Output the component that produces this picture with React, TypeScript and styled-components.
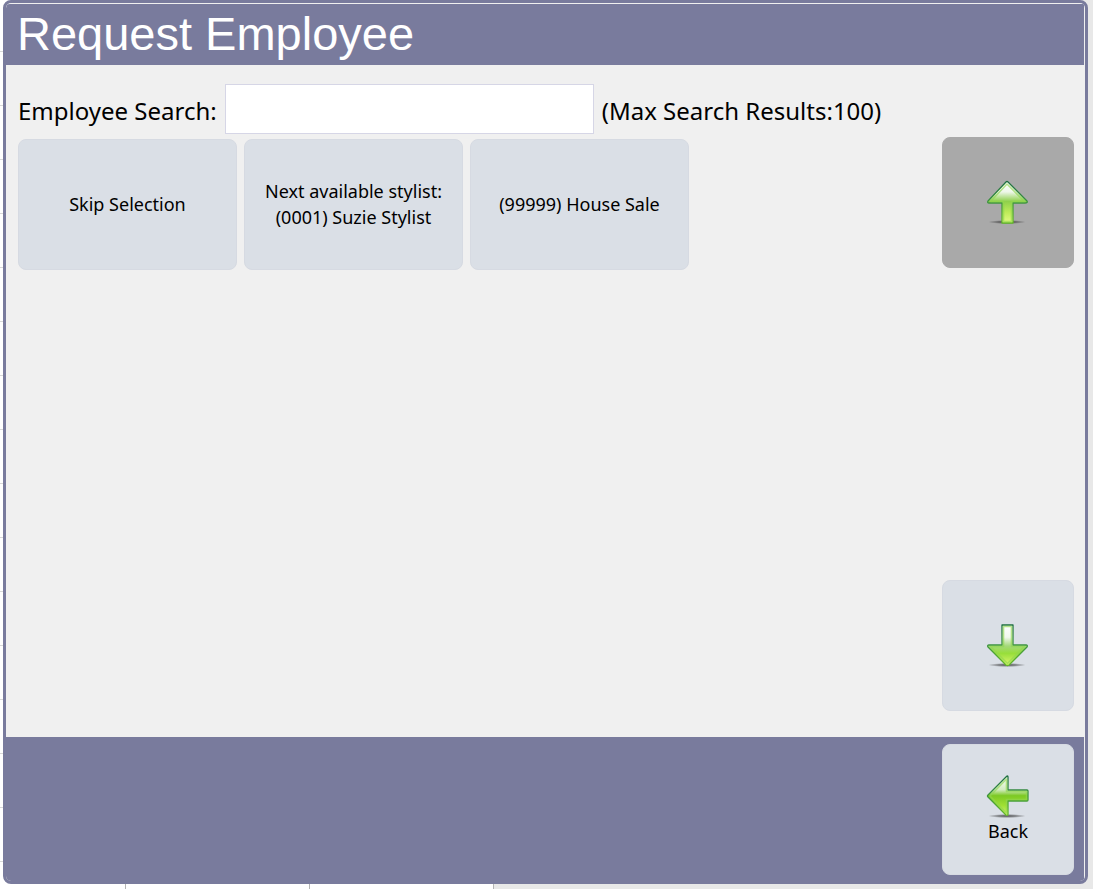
import React from "react";
import styled, { createGlobalStyle } from "styled-components";

const SLATE = "#797b9d";
const PANEL = "#f0f0f0";
const TILE = "#dadfe6";

const GlobalStyle = createGlobalStyle`
  * { box-sizing: border-box; }
  body {
    margin: 0;
    background: #e8e8e8;
    color: #000;
    font-family: Tahoma, "Noto Sans", sans-serif;
  }
  button, input { font-family: inherit; color: inherit; }
`;

const Screen = styled.div`
  position: relative;
  display: flex;
  min-height: 100vh;
  padding: 0 5px 5px 3px;
`;

/* The appointment grid that shows around the edges of the dialog. */
const GridBehind = styled.div`
  position: absolute;
  inset: 0 auto 0 0;
  width: 494px;
  background:
    repeating-linear-gradient(to left, #b4b4b4 0 1px, transparent 1px 184px),
    repeating-linear-gradient(to bottom, transparent 0 53px, #d8d8d8 53px 54px) 0 -2px,
    #fff;
`;

const Dialog = styled.section`
  position: relative;
  flex: 1;
  display: flex;
  flex-direction: column;
  padding: 1px 1px 0 0;
  border: 3px solid ${SLATE};
  border-radius: 8px;
  background: ${PANEL};
  overflow: hidden;
`;

const Header = styled.header`
  padding: 0 11px;
  background: ${SLATE};
  border-top-left-radius: 4px;
`;

const Title = styled.h1`
  margin: 0;
  padding-bottom: 1px;
  color: #fff;
  font: 400 47px/60px Arial, "Liberation Sans", sans-serif;
`;

const Content = styled.main`
  flex: 1;
  display: flex;
  flex-direction: column;
  gap: 3px;
  padding: 19px 10px 26px 12px;
`;

const SearchRow = styled.div`
  display: flex;
  align-items: center;
  gap: 8px;
  font-size: 24px;
  line-height: 46px;
  white-space: nowrap;
`;

const SearchLabel = styled.label`
  padding-top: 4px;
`;

const SearchLimit = styled.span`
  padding-top: 4px;
`;

const SearchInput = styled.input`
  width: 369px;
  height: 50px;
  padding: 0 8px;
  border: 1px solid #d6d6e6;
  border-radius: 0;
  background: #fff;
  font-size: 24px;
`;

const Results = styled.div`
  flex: 1;
  display: flex;
  justify-content: space-between;
  gap: 12px;
`;

const EmployeeList = styled.div`
  display: flex;
  flex-wrap: wrap;
  align-content: flex-start;
  gap: 7px;
  padding-top: 2px;
`;

const Scroller = styled.div`
  display: flex;
  flex-direction: column;
  justify-content: space-between;
`;

const Tile = styled.button<{ $wide?: boolean }>`
  display: flex;
  flex-direction: column;
  align-items: center;
  justify-content: center;
  width: ${(p) => (p.$wide ? 219 : 132)}px;
  height: 131px;
  padding: 0 0 2px;
  border: 1px solid #d6dae2;
  border-radius: 8px;
  background: ${TILE};
  font-size: 18px;
  line-height: 26px;
  white-space: pre-line;

  &:disabled {
    border-color: #a9a9a9;
    background: #a9a9a9;
  }
`;

const Footer = styled.footer`
  display: flex;
  justify-content: flex-end;
  padding: 7px 10px 6px;
  background: ${SLATE};
`;

const Glyph = styled.svg`
  display: block;
  width: 44px;
  height: 44px;
`;

type Direction = "up" | "down" | "left";

const outlines: Record<Direction, string> = {
  up: "M20 2 Q21 1 22 2 L41 21 Q42 23 39 23 H27 V43 H16 V23 H3 Q1 23 2 21 Z",
  down: "M16 2 H27 V22 H40 Q42 22 41 24 L23 42 Q21.5 43 20 42 L2 24 Q1 22 3 22 H16 Z",
  left: "M20 3 Q22 1 22 3 V16 H41 Q42 16 42 17 V26 Q42 27 41 27 H22 V40 Q22 42 20 41 L2 23 Q1 22 2 21 Z",
};

const insets: Record<Direction, string> = {
  up: "M21 4 L38.5 21.5 H25.5 V41.5 H17.5 V21.5 H4.5 Z",
  down: "M17.5 3.5 H25.5 V23.5 H38.5 L21.5 40.5 L4.5 23.5 H17.5 Z",
  left: "M20.5 5 V17.5 H40.5 V25.5 H20.5 V39 L4 22 Z",
};

const fills: Record<Direction, [number, string][]> = {
  up: [[0, "#ffffff"], [0.25, "#eef7ea"], [0.48, "#8fd04c"], [0.75, "#bfec5a"], [1, "#e4fa86"]],
  down: [[0, "#ffffff"], [0.3, "#f2f8ef"], [0.52, "#a3d878"], [0.7, "#97de3a"], [1, "#e0f86f"]],
  left: [[0, "#ffffff"], [0.35, "#d2ebc0"], [0.5, "#7cc924"], [0.75, "#a0e034"], [1, "#d6f570"]],
};

function Arrow({ direction }: { direction: Direction }) {
  const id = `arrow-${direction}`;
  return (
    <Glyph viewBox="0 0 44 44" aria-hidden="true">
      <defs>
        <linearGradient id={`${id}-fill`} x1="0" y1="0" x2="0" y2="1">
          {fills[direction].map(([offset, color]) => (
            <stop key={offset} offset={offset} stopColor={color} />
          ))}
        </linearGradient>
        <linearGradient id={`${id}-edge`} x1="0" y1="0" x2="0" y2="1">
          <stop offset="0" stopColor="#1f7040" />
          <stop offset="0.5" stopColor="#3d9440" />
          <stop offset="1" stopColor="#62b927" />
        </linearGradient>
        <radialGradient id={`${id}-shade`}>
          <stop offset="0" stopColor="#333" stopOpacity="0.8" />
          <stop offset="0.5" stopColor="#333" stopOpacity="0.5" />
          <stop offset="1" stopColor="#333" stopOpacity="0" />
        </radialGradient>
      </defs>
      <ellipse cx="21" cy="42" rx="19" ry="2" fill={`url(#${id}-shade)`} />
      <path
        d={outlines[direction]}
        fill={`url(#${id}-fill)`}
        stroke={`url(#${id}-edge)`}
        strokeWidth="1.3"
        strokeLinejoin="round"
      />
      <path
        d={insets[direction]}
        fill="none"
        stroke="#8fd650"
        strokeOpacity="0.65"
        strokeWidth="1.6"
        strokeLinejoin="round"
      />
    </Glyph>
  );
}

const choices = [
  "Skip Selection",
  "Next available stylist:\n(0001) Suzie Stylist",
  "(99999) House Sale",
];

export default function App() {
  return (
    <>
      <GlobalStyle />
      <Screen>
        <GridBehind />
        <Dialog role="dialog" aria-labelledby="dialog-title">
          <Header>
            <Title id="dialog-title">Request Employee</Title>
          </Header>
          <Content>
            <SearchRow>
              <SearchLabel htmlFor="employee-search">Employee Search:</SearchLabel>
              <SearchInput id="employee-search" type="text" />
              <SearchLimit>(Max Search Results:100)</SearchLimit>
            </SearchRow>
            <Results>
              <EmployeeList>
                {choices.map((choice) => (
                  <Tile key={choice} type="button" $wide>
                    {choice}
                  </Tile>
                ))}
              </EmployeeList>
              <Scroller>
                <Tile type="button" aria-label="Scroll up" disabled>
                  <Arrow direction="up" />
                </Tile>
                <Tile type="button" aria-label="Scroll down">
                  <Arrow direction="down" />
                </Tile>
              </Scroller>
            </Results>
          </Content>
          <Footer>
            <Tile type="button">
              <Arrow direction="left" />
              Back
            </Tile>
          </Footer>
        </Dialog>
      </Screen>
    </>
  );
}
